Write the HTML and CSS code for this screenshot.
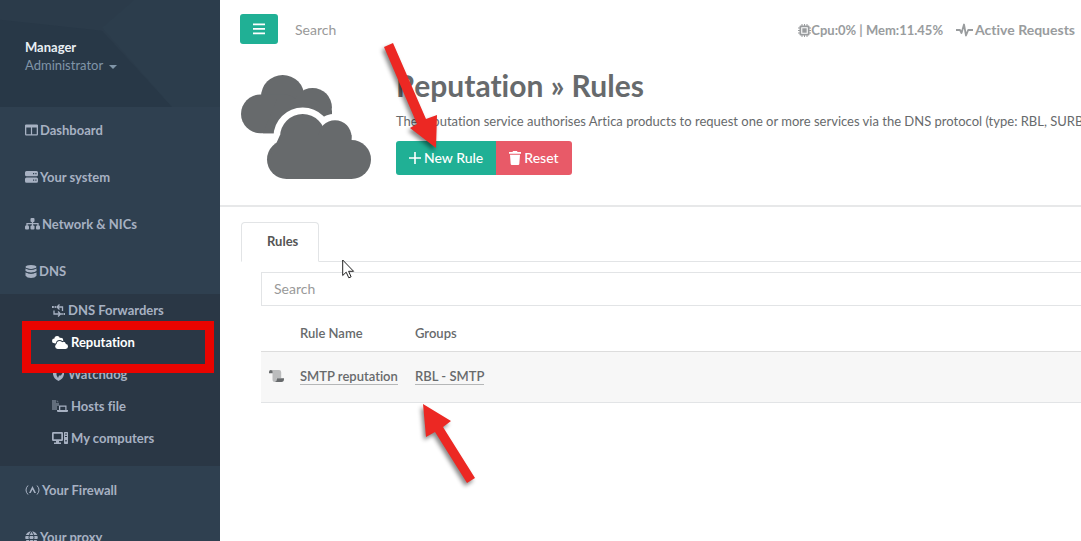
FILE: index.html
```html
<!DOCTYPE html>
<html lang="en">
<head>
<meta charset="utf-8">
<title>Reputation » Rules</title>
<link rel="stylesheet" href="styles.css">
</head>
<body>
<svg class="defs" aria-hidden="true">
  <symbol id="clouds" viewBox="0 0 130 104">
    <circle cx="41.700" cy="21.700" r="21.700"/>
    <circle cx="71.500" cy="32.300" r="19.400"/>
    <rect y="19.500" width="62" height="38.800" rx="19.400"/>
    <path d="M36 24H84L91 36V44L80 58.300H22Z"/>
    <g class="halo">
      <circle cx="61.700" cy="61.700" r="22.700"/>
      <circle cx="94" cy="61.700" r="16.500"/>
      <rect x="26" y="65" width="104" height="39" rx="19.500"/>
    </g>
    <circle cx="61.700" cy="61.700" r="22.700"/>
    <circle cx="94" cy="61.700" r="16.500"/>
    <rect x="26" y="65" width="104" height="39" rx="19.500"/>
    <path d="M39 60H110.500V66L120 80H30Z"/>
  </symbol>
</svg>
<div class="layout">
  <aside class="sidebar">
    <header class="profile">
      <svg class="profile-art" viewBox="0 0 220 108" preserveAspectRatio="none" aria-hidden="true">
        <path fill="#2b3b4a" d="M0 0H220V108H172L102 31 0 20Z"/>
        <path fill="#2c3d4c" d="M134 0H220V108H172L102 28Z"/>
      </svg>
      <strong class="profile-name">Manager</strong>
      <button class="profile-role" type="button">Administrator <span class="caret"></span></button>
    </header>
    <nav>
      <ul class="menu">
        <li><a href="#"><svg width="13" height="12" viewBox="0 0 13 12"><path fill-rule="evenodd" d="M1.500 0.500h10A1.300 1.300 0 0 1 13 2v8.300a1.300 1.300 0 0 1-1.500 1.200h-10A1.300 1.300 0 0 1 0 10.300V2A1.300 1.300 0 0 1 1.500.5zM1.300 3.500v6.700H5.900V3.500zm5.800 0v6.700h4.600V3.500z"/></svg>Dashboard</a></li>
        <li><a href="#"><svg width="13" height="12" viewBox="0 0 13 12"><path fill-rule="evenodd" d="M1.500 0h10A1.500 1.500 0 0 1 13 1.500v2.200a1.500 1.500 0 0 1-1.500 1.500h-10A1.500 1.500 0 0 1 0 3.700V1.500A1.500 1.500 0 0 1 1.500 0zM8 2v1.200h1.200V2zm2.300 0v1.200h1.200V2zM1.500 6.500h10A1.500 1.500 0 0 1 13 8v2.200a1.500 1.500 0 0 1-1.500 1.500h-10A1.500 1.500 0 0 1 0 10.200V8a1.500 1.500 0 0 1 1.500-1.500zM8 8.500v1.200h1.200V8.500zm2.300 0v1.200h1.200V8.500z"/></svg>Your system</a></li>
        <li><a href="#"><svg width="15" height="12" viewBox="0 0 15 12"><rect x="5.500" width="4" height="4" rx="1"/><rect y="7.500" width="4" height="4" rx="1"/><rect x="5.500" y="7.500" width="4" height="4" rx="1"/><rect x="11" y="7.500" width="4" height="4" rx="1"/><path class="line" d="M7.500 3v5M2 8V5.700H13V8"/></svg>Network &amp; NICs</a></li>
        <li class="open"><a href="#"><svg width="12" height="13" viewBox="0 0 12 13"><ellipse cx="6" cy="2" rx="5.500" ry="2"/><path d="M.5 3.200q5.500 3 11 0V6Q10 7.700 6 7.700T.5 6zM.5 7.300q5.500 3 11 0v3.500Q10 13 6 13T.5 10.800z"/><path stroke="#2f4050" stroke-width=".8" fill="none" d="M.5 3.300q5.500 2.600 11 0M.5 7q5.500 2.600 11 0"/></svg>DNS</a>
          <ul class="submenu">
            <li><a href="#"><svg width="13" height="13" viewBox="0 0 13 13"><path class="line" d="M4.500 3H10.500V7M7.500.5L5 3l2.500 2.500M2 6.500V10H8M6 7.500L8.500 10 6 12.500"/><path d="M0 2h1.800v2H0zM2.600 2h1.300v2H2.600zM9.300 9h1.400v2H9.300zM11.500 9H13v2h-1.500z"/></svg>DNS Forwarders</a></li>
            <li class="active"><a href="#"><svg width="16" height="13"><use href="#clouds"/></svg>Reputation</a></li>
            <li><a href="#"><svg width="13" height="13" viewBox="0 0 13 13"><path fill-rule="evenodd" d="M6.500 0L12 2v4.500Q11 11 6.500 13 2 11 1 6.500V2zM4.500 3v4l1.500 3 1-2.500h2L10.500 5 8.500 4.500 7.500 3z"/></svg>Watchdog</a></li>
            <li><a href="#"><svg width="16" height="13" viewBox="0 0 16 13"><path opacity=".45" d="M0 0h4v3h3v3H5v4H0zM4.700 0L7 2.300H4.700z"/><path fill-rule="evenodd" d="M7 5.500h7.500V10H16v1q0 1-1 1H6q-1 0-1-1v-1h2zm1.300 1.300V10h5V6.800z"/></svg>Hosts file</a></li>
            <li><a href="#"><svg width="16" height="12" viewBox="0 0 16 12"><path fill-rule="evenodd" d="M1.200 0h8.600Q11 0 11 1.200v6.600Q11 9 9.800 9H7v1.500h2V12H2v-1.500h2V9H1.200Q0 9 0 7.800V1.200Q0 0 1.200 0zm.5 1.700v5.600h7.600V1.700zM12.700 0h2.600q.7 0 .7.700v10.600q0 .7-.7.700h-2.600q-.7 0-.7-.7V.7q0-.7.7-.7zM13 1.500v1h2v-1zM13 4v1h2V4zm.3 4v1.500h1.400V8z"/></svg>My computers</a></li>
          </ul>
        </li>
        <li><a href="#"><svg width="15" height="12" viewBox="0 0 15 12"><path class="thin" d="M3 1.500Q-1 6 3 10.500M12 1.500q4 4.500 0 9"/><path d="M7.500 2L11 9H9.300L7.500 5.500 5.700 9H4z"/></svg>Your Firewall</a></li>
        <li><a href="#"><svg width="13" height="13" viewBox="0 0 13 13"><circle cx="6.500" cy="6.500" r="6.200"/><path stroke="#2f4050" fill="none" d="M0 4.500h13M0 8.500h13M6.500 0Q1.500 6.500 6.500 13M6.500 0q5 6.500 0 13"/></svg>Your proxy</a></li>
      </ul>
    </nav>
    <span class="highlight" aria-hidden="true"></span>
  </aside>

  <main class="main">
    <div class="topbar">
      <button class="btn toggle" type="button" aria-label="Toggle menu"><svg width="12" height="12" viewBox="0 0 12 12"><path d="M0 .5h12v1.700H0zm0 4.500h12v1.700H0zm0 4.500h12v1.700H0z"/></svg></button>
      <input class="top-search" type="text" placeholder="Search" aria-label="Search">
      <a class="stat usage" href="#"><svg width="13" height="13" viewBox="0 0 13 13"><path fill-rule="evenodd" d="M2.500 1.500h8q1 0 1 1v8q0 1-1 1h-8q-1 0-1-1v-8q0-1 1-1zm.7 1.700v6.600h6.600v-6.600z"/><path d="M4.300 4.300h4.400v4.400H4.300zM3.500 0h1v2h-1zm0 11h1v2h-1zM6 0h1v2H6zm0 11h1v2H6zM8.500 0h1v2h-1zm0 11h1v2h-1zM0 3.500h2v1H0zM0 6h2v1H0zm0 2.500h2v1H0zm11-5h2v1h-2zM11 6h2v1h-2zm0 2.500h2v1h-2z"/></svg>Cpu:0% | Mem:11.45%</a>
      <a class="stat spaced" href="#"><svg width="17" height="14" viewBox="0 0 17 14"><path class="pulse" d="M0 7h4l1.500 3L8 1.500 10 12.500 12.200 7H17"/></svg>Active Requests</a>
    </div>

    <section class="heading">
      <svg class="hero" width="130" height="104" aria-hidden="true"><use href="#clouds"/></svg>
      <div class="heading-body">
        <h1>Reputation » Rules</h1>
        <p>The reputation service authorises Artica products to request one or more services via the DNS protocol (type: RBL, SURBL</p>
        <div class="actions">
          <button class="btn first" type="button"><svg width="12" height="12" viewBox="0 0 12 12"><path d="M5.200 0h1.600v5.200H12v1.600H6.800V12H5.200V6.800H0V5.200h5.200z"/></svg>New Rule</button>
          <button class="btn danger" type="button"><svg width="12" height="14" viewBox="0 0 12 14"><path d="M0 1h3.500L4 0h4l.5 1H12v1.800H0zM1 3.700h10l-.7 9.200Q10.200 14 9.200 14H2.800q-1 0-1.100-1.100z"/></svg>Reset</button>
        </div>
      </div>
    </section>

    <section class="content">
      <div class="tabs"><button class="tab" type="button">Rules</button></div>
      <div class="panel">
        <input class="filter" type="text" placeholder="Search" aria-label="Search rules">
        <table class="rules">
          <thead><tr><th class="col-icon"></th><th class="col-name">Rule Name</th><th>Groups</th></tr></thead>
          <tbody><tr>
            <td><svg width="15" height="12" viewBox="0 0 15 12"><path fill="#bbbcbd" d="M2.500 0H10q2.200 0 2.200 2.200V8H7v4H6Q3.500 12 3.500 9.500V3z"/><path d="M0 3.200V2Q0 0 1.800 0t1.800 2v1.200zM7.500 8.200H15V9q0 3-2.500 3H6q1.500-.7 1.500-2z"/></svg></td>
            <td><a href="#">SMTP reputation</a></td>
            <td><a href="#">RBL - SMTP</a></td>
          </tr></tbody>
        </table>
      </div>
    </section>
  </main>

  <svg class="marker marker-top" width="70" height="120" viewBox="0 0 70 120" aria-hidden="true"><path d="M4 6L13 2 46 78 57 74 56 107 30 87 37 83Z" /></svg>
  <svg class="marker marker-row" width="70" height="95" viewBox="0 0 70 95" aria-hidden="true"><path d="M8 4L36 21 28 27 60 78 52 83 20 32 11 37Z"/></svg>
  <svg class="pointer" width="13" height="20" viewBox="0 0 13 20" aria-hidden="true"><path fill="#fff" stroke="#222" d="M.7 1v15.500l3.500-3.300 2.600 5.600 2.300-1-2.500-5.500h5z"/></svg>
</div>
</body>
</html>
```
FILE: styles.css
```css
* { box-sizing: border-box; }
html, body { height: 100%; }
body {
  margin: 0;
  overflow: hidden;
  background: #fff;
  color: #676a6c;
  font: 13px/18px Lato, "Liberation Sans", sans-serif;
  font-variant-ligatures: none;
}
svg { fill: currentColor; flex: none; }
a { color: inherit; text-decoration: none; }
button, input { font: inherit; }
ul { list-style: none; margin: 0; padding: 0; }
.defs { position: absolute; width: 0; height: 0; }
.line { fill: none; stroke: currentColor; stroke-width: 1.3; }
.thin { fill: none; stroke: currentColor; stroke-width: 1; }
.pulse { fill: none; stroke: currentColor; stroke-width: 1.8; stroke-linejoin: round; }
.halo { stroke: var(--halo); fill: var(--halo); stroke-width: 13; }

.layout { position: relative; display: flex; height: 100%; }

.sidebar {
  position: relative;
  flex: 0 0 220px;
  overflow: hidden;
  background: #2f4050;
  color: #a7b1c2;
}
.profile {
  position: relative;
  display: flex;
  flex-direction: column;
  align-items: flex-start;
  padding: 38px 25px 33px;
  background: #283847;
}
.profile-art { position: absolute; inset: 0; width: 100%; height: 100%; }
.profile-name { position: relative; color: #e9eff4; }
.profile-role {
  position: relative;
  display: flex;
  align-items: center;
  gap: 6px;
  padding: 0;
  border: 0;
  background: none;
  color: #8095a8;
}
.caret { border: 4px solid transparent; border-top-color: currentColor; border-bottom: 0; margin-top: 3px; }
.menu { display: grid; gap: 1px; font-weight: 700; }
.menu a { display: flex; align-items: center; gap: 2px; padding: 14px 25px; }
.submenu { padding-bottom: 12px; background: #2a3745; }
.submenu a { gap: 3px; padding: 7px 25px 7px 52px; }
.active { --halo: #2a3745; color: #fff; }
.highlight {
  position: absolute;
  top: 321px;
  left: 22px;
  width: 192px;
  height: 52px;
  border: 9px solid #e90400;
}

.main { flex: 1; min-width: 0; overflow: hidden; }
.topbar { display: flex; align-items: center; height: 60px; padding: 0 6px 2px 20px; }
.btn {
  display: flex;
  align-items: center;
  justify-content: center;
  gap: 3px;
  padding: 8px 13px;
  border: 0;
  border-radius: 3px;
  background: #20b095;
  color: #fff;
  font-size: 14px;
  font-weight: 500;
}
.toggle { height: 30px; }
.top-search {
  flex: 1;
  min-width: 0;
  margin-left: 17px;
  padding: 2px 0 0;
  border: 0;
  outline: 0;
  font-size: 14px;
}
input::placeholder { color: #999; opacity: 1; }
.stat { display: flex; align-items: center; padding-top: 2px; white-space: nowrap; color: #999c9e; font-size: 14px; font-weight: 700; }
.usage { font-size: 13px; }
.spaced { gap: 2px; margin-left: 13px; }

.heading {
  display: flex;
  gap: 25px;
  padding: 10px 0 26px 21px;
  border-bottom: 2px solid #e7e8e9;
}
.hero { --halo: #fff; margin-top: 5px; }
.heading-body { min-width: 0; white-space: nowrap; }
h1 { margin: 0; font-size: 30px; line-height: 30px; font-weight: 700; }
p { margin: 12px 0 11px; }
.actions { display: flex; }
.first { border-radius: 3px 0 0 3px; }
.danger { border-radius: 0 3px 3px 0; background: #e85a68; }

.content { padding: 15px 0 0 21px; }
.tabs { display: flex; border-bottom: 1px solid #e2e4e6; }
.tab {
  margin-bottom: -1px;
  padding: 9px 20px 11px 25px;
  border: 1px solid #e2e4e6;
  border-bottom-color: #fff;
  border-radius: 4px 4px 0 0;
  background: #fff;
  color: #555;
  font-weight: 700;
}
.panel { padding: 10px 0 0 20px; }
.filter {
  display: block;
  width: calc(100% + 20px);
  height: 34px;
  padding: 0 12px 2px;
  border: 1px solid #e2e4e6;
  font-size: 14px;
}
.rules { width: 100%; border-collapse: collapse; text-align: left; font-weight: 600; }
.rules th { padding: 18px 8px 9px; border-bottom: 1px solid #ddd; font-weight: 600; }
.rules td { padding: 15px 8px 17px; border-bottom: 1px solid #e2e4e6; background: #f7f7f7; }
.rules td svg { display: block; }
.rules a { border-bottom: 1px solid #b5b7b8; }
.col-icon { width: 31px; }
.col-name { width: 115px; }

.marker { position: absolute; fill: #ec2823; filter: drop-shadow(-2px 3px 2px #0007); }
.marker-top { top: 41px; left: 380px; }
.marker-row { top: 400px; left: 415px; }
.pointer { position: absolute; top: 259px; left: 342px; }
```
